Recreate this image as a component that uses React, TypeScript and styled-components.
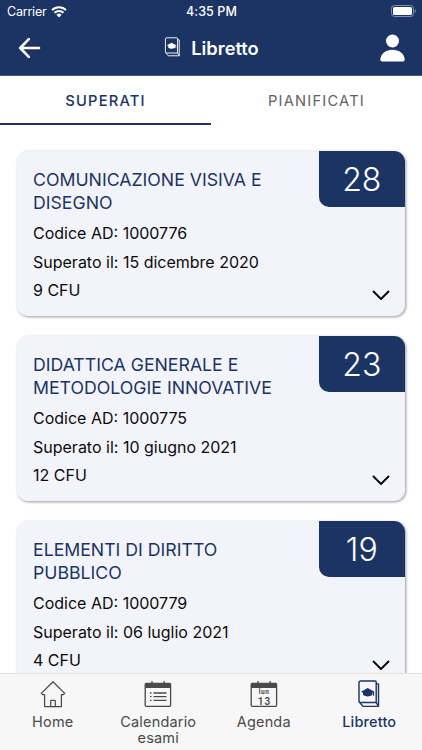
import React from "react";
import styled, { createGlobalStyle } from "styled-components";

const NAVY = "#1b3464";

const GlobalStyle = createGlobalStyle`
  * { box-sizing: border-box; }
  body { margin: 0; background: #fff; font-family: Inter, "Liberation Sans", sans-serif; }
`;

const Screen = styled.div`
  width: 422px;
  height: 750px;
  overflow: hidden;
  display: flex;
  flex-direction: column;
  background: #fff;
`;

const Top = styled.header`
  flex: none;
  height: 76px;
  background: ${NAVY};
  color: #fff;
  border-bottom: 1px solid #4a5f86;
`;

const StatusBar = styled.div`
  height: 22px;
  display: grid;
  grid-template-columns: 1fr auto 1fr;
  align-items: center;
  padding: 0 6px 0 7px;
`;

const Carrier = styled.div`
  display: flex;
  align-items: center;
  gap: 5px;
  font-size: 12.5px;
  line-height: 22px;
  letter-spacing: -0.22px;
`;

const Clock = styled.div`
  font-size: 12.5px;
  font-weight: 500;
  line-height: 23px;
  letter-spacing: 0.1px;
`;

const Battery = styled.div`
  justify-self: end;
  height: 12px;
  display: flex;
  margin-top: -1px;
`;

const NavBar = styled.div`
  height: 52px;
  display: grid;
  grid-template-columns: 60px 1fr 60px;
  align-items: center;
  padding: 0 17px 0 18px;
  svg { display: block; }
`;

const Heading = styled.h1`
  margin: 0;
  display: flex;
  align-items: center;
  justify-content: center;
  gap: 10px;
  font-size: 18.3px;
  font-weight: 600;
  letter-spacing: 0;
  svg { margin-top: -2px; }
`;

const ProfileSlot = styled.div`
  justify-self: end;
`;

const Tabs = styled.div`
  flex: none;
  display: grid;
  grid-template-columns: 1fr 1fr;
  height: 49px;
`;

const Tab = styled.div<{ $active?: boolean }>`
  height: 48.5px;
  text-align: center;
  font-size: 14.7px;
  line-height: 50px;
  letter-spacing: 1.2px;
  color: ${(p) => (p.$active ? NAVY : "#626262")};
  font-weight: ${(p) => (p.$active ? 500 : 400)};
  border-bottom: 2px solid ${(p) => (p.$active ? NAVY : "transparent")};
`;

const List = styled.main`
  flex: 1;
  min-height: 0;
  overflow: hidden;
  padding: 26px 17px 0 16.5px;
  display: flex;
  flex-direction: column;
  gap: 20px;
`;

const Card = styled.article`
  flex: none;
  height: 165px;
  border-radius: 11px;
  background: #f3f4f9;
  box-shadow: 1px 1px 3px rgba(0, 0, 0, 0.4);
  display: flex;
  justify-content: space-between;
  overflow: hidden;
`;

const Info = styled.div`
  padding: 17px 0 0 16.5px;
  width: 270px;
`;

const CourseName = styled.h2`
  margin: 0 0 4.2px;
  color: ${NAVY};
  font-size: 17.7px;
  font-weight: 400;
  line-height: 23.4px;
  white-space: pre-line;
`;

const Detail = styled.p`
  margin: 0;
  color: #0b0b0d;
  font-size: 16px;
  line-height: 28.5px;
  font-weight: 400;
  white-space: nowrap;
`;

const Side = styled.div`
  width: 86.5px;
  display: flex;
  flex-direction: column;
  justify-content: space-between;
  align-items: flex-end;
`;

const Grade = styled.div`
  width: 86.5px;
  height: 56px;
  border-bottom-left-radius: 10px;
  background: ${NAVY};
  color: #fff;
  text-align: center;
  font-size: 32px;
  line-height: 57px;
  font-weight: 300;
`;

const Chevron = styled.svg`
  display: block;
  margin: 0 15px 15px 0;
`;

const BottomBar = styled.nav`
  flex: none;
  height: 77px;
  display: grid;
  grid-template-columns: repeat(4, 1fr);
  background: #f7f7f7;
  border-top: 1px solid #e2e2e4;
`;

const BottomItem = styled.div<{ $active?: boolean }>`
  display: flex;
  flex-direction: column;
  align-items: center;
  padding-top: 6px;
  color: ${(p) => (p.$active ? NAVY : "#4a4a4a")};
  font-size: 14.5px;
  font-weight: ${(p) => (p.$active ? 500 : 400)};
  letter-spacing: 0.17px;
  line-height: 16.4px;
  text-align: center;
  white-space: pre-line;
  svg { display: block; margin-bottom: 6px; }
`;

const BookIcon = ({ width, height, stroke }: { width: number; height: number; stroke: number }) => (
  <svg width={width} height={height} viewBox="0 0 24 28" fill="none" stroke="currentColor" strokeWidth={stroke} strokeLinejoin="round">
    <path d="M3.6 1h14.6a1 1 0 0 1 1 1v20.5H3.6a1.6 1.6 0 0 1-1.6-1.6V2.6A1.6 1.6 0 0 1 3.6 1z" />
    <path d="M19.2 3.9h2.3v22.5H6L2.2 22M19.2 22.5l2.1 3.5" />
    <g fill="currentColor" stroke="none">
      <path d="M4 11.7 10.7 8l6.7 3.7-6.7 3.5z" />
      <path d="M6 12h9.4v3.1q-4.7 2.8-9.4 0z" />
    </g>
    <path d="M16.6 11.7v4" strokeWidth="1.1" />
  </svg>
);

const WifiIcon = () => (
  <svg width="16" height="12" viewBox="0 0 16 12" fill="none" stroke="#fff" strokeWidth="2">
    <path d="M1 4.1a10 10 0 0 1 14 0M3.5 6.8a6.4 6.4 0 0 1 9 0" />
    <path d="M5.4 8.8a3.8 3.8 0 0 1 5.2 0L8 11.4z" fill="#fff" stroke="none" />
  </svg>
);

const BatteryIcon = () => (
  <svg width="25" height="12" viewBox="0 0 25 12">
    <rect x=".5" y=".5" width="22" height="11" rx="3" fill="none" stroke="#8492ad" />
    <rect x="2" y="2" width="19" height="8" rx="1.6" fill="#fff" />
    <path d="M23.7 4v4q1.2-.6 1.2-2t-1.2-2z" fill="#8492ad" />
  </svg>
);

const HomeIcon = () => (
  <svg width="26" height="28" viewBox="0 0 26 28" fill="none" stroke="currentColor" strokeWidth="1.25" strokeLinejoin="round">
    <path d="M13 1.7 1.3 13.4l1.2 1.2h2.1v12h16.8v-12h2.1l1.2-1.2z" />
    <path d="M10.7 26.5v-5.4q0-.8.8-.8h3q.8 0 .8.8v5.4" />
  </svg>
);

const CalendarFrame = ({ children }: { children: React.ReactNode }) => (
  <svg width="28" height="28" viewBox="0 0 28 28" fill="none" stroke="currentColor" strokeWidth="1.3">
    <rect x="1.2" y="3.5" width="25.4" height="22.8" rx="1" />
    <path d="M1 3h26v5H1z" fill="currentColor" stroke="none" />
    <path d="M8 1v3M20.2 1v3" />
    {children}
  </svg>
);

const ExamIcon = () => (
  <CalendarFrame>
    <path d="M9.5 13h13M9.5 16.7h13M9.5 20.4h13" />
    <path d="M6 13h1.5M6 16.7h1.5M6 20.4h1.5" />
  </CalendarFrame>
);

const AgendaIcon = () => (
  <CalendarFrame>
    <g fill="currentColor" stroke="none" fontFamily="Roboto, sans-serif" textAnchor="middle">
      <text x="14.2" y="14.3" fontSize="6.5" fontWeight="700" letterSpacing=".6">lun</text>
      <text x="14.6" y="24.8" fontSize="10" fontWeight="600" letterSpacing="1.2">13</text>
    </g>
  </CalendarFrame>
);

const courses = [
  { name: "COMUNICAZIONE VISIVA E\nDISEGNO", code: "1000776", date: "15 dicembre 2020", credits: 9, grade: 28 },
  { name: "DIDATTICA GENERALE E\nMETODOLOGIE INNOVATIVE", code: "1000775", date: "10 giugno 2021", credits: 12, grade: 23 },
  { name: "ELEMENTI DI DIRITTO\nPUBBLICO", code: "1000779", date: "06 luglio 2021", credits: 4, grade: 19 },
];

export default function App() {
  return (
    <Screen>
      <GlobalStyle />
      <Top>
        <StatusBar>
          <Carrier>Carrier <WifiIcon /></Carrier>
          <Clock>4:35 PM</Clock>
          <Battery><BatteryIcon /></Battery>
        </StatusBar>
        <NavBar>
          <svg width="24" height="22" viewBox="0 0 24 22" fill="none" stroke="#fff" strokeWidth="2.6" strokeLinecap="round" strokeLinejoin="round">
            <path d="M10.8 2.2 2.2 11l8.6 8.8M3 11h18" />
          </svg>
          <Heading><BookIcon width={17} height={20} stroke={1.3} />Libretto</Heading>
          <ProfileSlot>
            <svg width="25" height="28" viewBox="0 0 25 28" fill="#fff">
              <circle cx="12.5" cy="7" r="6.5" />
              <path d="M2.2 27.5Q.3 27.5.3 25.5C.7 19.5 6 15.7 12.5 15.7S24.3 19.5 24.7 25.5q0 2-1.9 2z" />
            </svg>
          </ProfileSlot>
        </NavBar>
      </Top>
      <Tabs>
        <Tab $active>SUPERATI</Tab>
        <Tab>PIANIFICATI</Tab>
      </Tabs>
      <List>
        {courses.map((c) => (
          <Card key={c.code}>
            <Info>
              <CourseName>{c.name}</CourseName>
              <Detail>Codice AD: {c.code}</Detail>
              <Detail>Superato il: {c.date}</Detail>
              <Detail>{c.credits} CFU</Detail>
            </Info>
            <Side>
              <Grade>{c.grade}</Grade>
              <Chevron width="18" height="12" viewBox="0 0 18 12" fill="none" stroke="#000" strokeWidth="1.8" strokeLinecap="round" strokeLinejoin="round">
                <path d="m1.5 2.5 7.5 7.5 7.5-7.5" />
              </Chevron>
            </Side>
          </Card>
        ))}
      </List>
      <BottomBar>
        <BottomItem><HomeIcon />Home</BottomItem>
        <BottomItem><ExamIcon />{"Calendario\nesami"}</BottomItem>
        <BottomItem><AgendaIcon />Agenda</BottomItem>
        <BottomItem $active><BookIcon width={24} height={28} stroke={1.4} />Libretto</BottomItem>
      </BottomBar>
    </Screen>
  );
}
